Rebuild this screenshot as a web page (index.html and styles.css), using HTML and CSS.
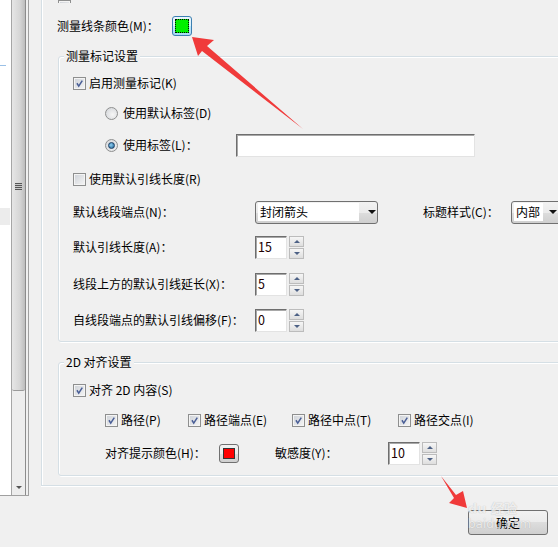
FILE: index.html
```html
<!DOCTYPE html>
<html lang="zh-CN">
<head>
  <meta charset="UTF-8">
  <title>测量设置</title>
  <link rel="stylesheet" href="styles.css">
</head>
<body>
  <div class="window">
    <aside class="sidebar">
      <div class="list">
        <span class="list-mark"></span>
        <span class="list-sel"></span>
      </div>
      <div class="vscroll">
        <div class="thumb"><span class="grip"></span></div>
        <div class="track"></div>
        <div class="arrow-down"></div>
      </div>
    </aside>

    <main class="main">
      <div class="outer">
        <div class="top-cut"><span class="check"></span></div>

        <div class="color-row">
          <span class="color-label">测量线条颜色(M)：</span>
          <span class="swatch focused"><span class="swatch-fill green"></span></span>
        </div>

        <section class="group">
          <div class="legend">测量标记设置</div>
          <div class="group-body rows-mark">
            <label class="opt"><span class="check"><svg viewBox="0 0 13 13"><path d="M3.5 6.2 L5.6 9.6 L9.8 3" /></svg></span>启用测量标记(K)</label>
            <label class="opt indent"><span class="radio"></span>使用默认标签(D)</label>
            <div class="row indent">
              <label class="opt label-l"><span class="radio on"><span class="dot"></span></span>使用标签(L)：</label>
              <span class="textbox wide"></span>
            </div>
            <label class="opt"><span class="check"></span>使用默认引线长度(R)</label>
            <div class="row">
              <span class="field-label">默认线段端点(N)：</span>
              <span class="combo combo-wide"><span class="combo-text">封闭箭头</span><span class="combo-arrow"></span></span>
              <span class="field-label-2">标题样式(C)：</span>
              <span class="combo combo-narrow"><span class="combo-text">内部</span><span class="combo-arrow"></span></span>
            </div>
            <div class="row">
              <span class="field-label">默认引线长度(A)：</span>
              <span class="spin"><span class="textbox num">15</span><span class="spin-btns"><span class="spin-btn up"></span><span class="spin-btn down"></span></span></span>
            </div>
            <div class="row">
              <span class="field-label">线段上方的默认引线延长(X)：</span>
              <span class="spin"><span class="textbox num">5</span><span class="spin-btns"><span class="spin-btn up"></span><span class="spin-btn down"></span></span></span>
            </div>
            <div class="row">
              <span class="field-label">自线段端点的默认引线偏移(F)：</span>
              <span class="spin"><span class="textbox num">0</span><span class="spin-btns"><span class="spin-btn up"></span><span class="spin-btn down"></span></span></span>
            </div>
          </div>
        </section>

        <section class="group group-align">
          <div class="legend">2D 对齐设置</div>
          <div class="group-body rows-align">
            <label class="opt"><span class="check"><svg viewBox="0 0 13 13"><path d="M3.5 6.2 L5.6 9.6 L9.8 3" /></svg></span>对齐 2D 内容(S)</label>
            <div class="row indent check-list">
              <label class="opt"><span class="check"><svg viewBox="0 0 13 13"><path d="M3.5 6.2 L5.6 9.6 L9.8 3" /></svg></span>路径(P)</label>
              <label class="opt"><span class="check"><svg viewBox="0 0 13 13"><path d="M3.5 6.2 L5.6 9.6 L9.8 3" /></svg></span>路径端点(E)</label>
              <label class="opt"><span class="check"><svg viewBox="0 0 13 13"><path d="M3.5 6.2 L5.6 9.6 L9.8 3" /></svg></span>路径中点(T)</label>
              <label class="opt"><span class="check"><svg viewBox="0 0 13 13"><path d="M3.5 6.2 L5.6 9.6 L9.8 3" /></svg></span>路径交点(I)</label>
            </div>
            <div class="row indent">
              <span class="hint-label">对齐提示颜色(H)：</span>
              <span class="swatch"><span class="swatch-fill red"></span></span>
              <span class="sens-label">敏感度(Y)：</span>
              <span class="spin"><span class="textbox num">10</span><span class="spin-btns"><span class="spin-btn up"></span><span class="spin-btn down"></span></span></span>
            </div>
          </div>
        </section>
      </div>

      <div class="footer">
        <button class="btn">确定</button>
      </div>
    </main>
  </div>

  <div class="watermark"><span class="wm-logo">du 经验</span><span class="wm-url">baidu.com</span></div>

  <svg class="arrows" viewBox="0 0 558 547">
    <polygon points="192,37 214,40 207,46 303,129 202,51 198,56" />
    <polygon points="441,476 456,495 463,491 467,508 449,503 454,498" />
  </svg>
</body>
</html>
```

FILE: styles.css
```css
html, body {
  margin: 0;
  padding: 0;
}
body {
  width: 558px;
  height: 547px;
  overflow: hidden;
  position: relative;
  background-color: #f0f0f0;
  font-family: "Noto Sans CJK SC", "Microsoft YaHei", sans-serif;
  font-size: 12px;
  line-height: 16px;
  color: #000;
}
.window {
  display: flex;
  height: 547px;
}

/* left list + scrollbar */
.sidebar {
  display: flex;
  width: 28px;
  height: 495px;
  border-right: 1px solid #a0a0a0;
  border-bottom: 1px solid #a0a0a0;
  flex-shrink: 0;
}
.list {
  width: 11px;
  background-color: #fff;
  border-right: 1px solid #a6a6a6;
  display: flex;
  flex-direction: column;
}
.list-mark {
  display: block;
  margin-top: 65px;
  width: 6px;
  height: 1px;
  background-color: #9ac0e6;
}
.list-sel {
  display: block;
  margin-top: 142px;
  width: 10px;
  height: 17px;
  background-color: #ececec;
}
.vscroll {
  width: 13px;
  border-right: 1px solid #8c8c8c;
  display: flex;
  flex-direction: column;
}
.thumb {
  height: 390px;
  background: linear-gradient(to right, #e6e6e6, #d6d6d6 60%, #bdbdbd);
  border-bottom: 1px solid #9a9a9a;
  border-radius: 0 0 2px 2px;
  display: flex;
  flex-direction: column;
  align-items: center;
}
.grip {
  display: block;
  margin-top: 183px;
  width: 7px;
  height: 7px;
  background: repeating-linear-gradient(to bottom, #555 0, #555 1px, #c8c8c8 1px, #c8c8c8 2px);
}
.track {
  flex: 1;
  background-color: #ededed;
}
.arrow-down {
  height: 16px;
  background-color: #ededed;
  display: flex;
  justify-content: center;
  align-items: center;
}
.arrow-down::before {
  content: "";
  border-left: 3px solid transparent;
  border-right: 3px solid transparent;
  border-top: 3px solid #555;
}

/* main panel */
.main {
  flex: 1;
  padding-left: 12px;
  display: flex;
  flex-direction: column;
}
.outer {
  width: 560px;
  height: 485px;
  box-sizing: content-box;
  padding-left: 16px;
  border-left: 1px solid #d5dfe5;
  border-bottom: 1px solid #d5dfe5;
  box-shadow: inset 1px 0 0 #fff, 0 1px 0 #fff;
}
.top-cut {
  height: 3px;
  overflow: hidden;
}
.top-cut .check {
  margin-top: -10px;
}
.color-row {
  display: flex;
  align-items: center;
  height: 24px;
  margin-top: 11px;
}
.color-label {
  width: 115px;
  margin-left: -1px;
}

/* colour buttons */
.swatch {
  display: inline-flex;
  box-sizing: border-box;
  width: 20px;
  height: 19px;
  padding: 3px;
  border: 1px solid #707070;
  border-radius: 3px;
  background: linear-gradient(#f2f2f2, #ebebeb 50%, #dddddd 50%, #cfcfcf);
}
.swatch.focused {
  height: 20px;
  padding: 2px;
  border-color: #3c7fb1;
  background: linear-gradient(#eaf6fd, #d9f0fc 50%, #bee6fd 50%, #a7d9f5);
}
.swatch-fill {
  flex: 1;
  border: 1px solid #333;
}
.focused .swatch-fill {
  border: 1px dotted #000;
}
.green {
  background-color: #00f000;
}
.red {
  background-color: #ff0000;
}

/* group boxes */
.group {
  width: 520px;
  margin-top: 18px;
  border: 1px solid #d5dfe5;
  border-radius: 3px;
  box-shadow: inset 1px 1px 0 #fff, 1px 1px 0 #fff;
}
.group-align {
  margin-top: 20px;
}
.legend {
  width: fit-content;
  margin: -9px 0 0 5px;
  padding: 0 2px;
  height: 16px;
  background-color: #f0f0f0;
}
.group-body {
  display: grid;
  align-items: center;
  padding-left: 14px;
  margin-top: 6px;
  padding-bottom: 3px;
}
.rows-mark {
  grid-template-rows: 26px 34px 30px 38px 28px 42px 32px 40px;
  padding-bottom: 1px;
}
.rows-align {
  grid-template-rows: 30px 30px 36px;
  margin-top: 5px;
  padding-bottom: 4px;
}
.row {
  display: flex;
  align-items: center;
}
.indent {
  margin-left: 32px;
}
.opt {
  display: flex;
  align-items: center;
}

/* checkbox + radio */
.check {
  display: inline-block;
  box-sizing: border-box;
  width: 13px;
  height: 13px;
  margin-right: 3px;
  border: 1px solid #8e8f8f;
  background: linear-gradient(135deg, #cdd1d7, #f6f6f6);
  box-shadow: inset 0 0 0 1px #f4f4f4;
  flex-shrink: 0;
}
.check svg {
  display: block;
  width: 11px;
  height: 11px;
}
.check path {
  fill: none;
  stroke: #4a5f97;
  stroke-width: 1.8;
}
.radio {
  display: inline-flex;
  justify-content: center;
  align-items: center;
  box-sizing: border-box;
  width: 13px;
  height: 13px;
  margin-right: 5px;
  border: 1px solid #8e8f8f;
  border-radius: 50%;
  background: radial-gradient(circle at 60% 60%, #f6f6f6, #cfd2d6);
}
.radio .dot {
  width: 5px;
  height: 5px;
  border-radius: 50%;
  background: radial-gradient(circle at 40% 40%, #8fd0f5, #1a5d8c);
  border: 1px solid #1b3f66;
}
.label-l {
  width: 131px;
}

/* inputs */
.textbox {
  display: block;
  box-sizing: border-box;
  height: 23px;
  background-color: #fff;
  border: 1px solid #e3e3e3;
  border-top-color: #6e6e6e;
  border-left-color: #6e6e6e;
  box-shadow: inset 1px 1px 0 #a8a8a8;
}
.textbox.wide {
  width: 239px;
}
.field-label {
  width: 182px;
}
.field-label-2 {
  width: 88px;
  margin-left: 45px;
}
.combo {
  display: flex;
  align-items: center;
  box-sizing: border-box;
  height: 23px;
  border: 1px solid #707070;
  border-radius: 3px;
  background: linear-gradient(#f2f2f2, #ebebeb 50%, #dddddd 50%, #cfcfcf);
}
.combo-wide {
  width: 123px;
}
.combo-narrow {
  width: 60px;
}
.combo-text {
  background-color: #fff;
  height: 18px;
  line-height: 18px;
  margin-left: 2px;
  padding-left: 2px;
}
.combo-wide .combo-text {
  width: 99px;
}
.combo-narrow .combo-text {
  padding-right: 3px;
}
.combo-arrow {
  margin-left: 9px;
  border-left: 4px solid transparent;
  border-right: 4px solid transparent;
  border-top: 4px solid #111;
}
.combo-narrow .combo-arrow {
  margin-left: 6px;
}
.spin {
  display: flex;
  gap: 2px;
}
.textbox.num {
  width: 32px;
  padding-left: 2px;
  line-height: 20px;
  color: #200000;
  font-size: 12.5px;
}
.spin-btns {
  display: flex;
  flex-direction: column;
  width: 15px;
  height: 23px;
  gap: 1px;
}
.spin-btn {
  flex: 1;
  display: flex;
  justify-content: center;
  align-items: center;
  border: 1px solid #bcbcbc;
  background: linear-gradient(#f6f6f6, #dedede);
}
.spin-btn.up::before {
  content: "";
  border-left: 3px solid transparent;
  border-right: 3px solid transparent;
  border-bottom: 3px solid #4d6185;
}
.spin-btn.down::before {
  content: "";
  border-left: 3px solid transparent;
  border-right: 3px solid transparent;
  border-top: 3px solid #4d6185;
}

/* 2D group rows */
.check-list .opt:nth-child(1) {
  width: 83px;
}
.check-list .opt:nth-child(2) {
  width: 104px;
}
.check-list .opt:nth-child(3) {
  width: 106px;
}
.hint-label {
  width: 114px;
}
.sens-label {
  width: 113px;
  margin-left: 36px;
}

/* footer */
.footer {
  width: 507px;
  display: flex;
  justify-content: flex-end;
  padding-top: 24px;
}
.btn {
  width: 80px;
  height: 25px;
  font-family: inherit;
  font-size: 12px;
  color: #000;
  border: 1px solid #707070;
  border-radius: 3px;
  background: linear-gradient(#f2f2f2, #ebebeb 50%, #dddddd 50%, #cfcfcf);
  padding: 0;
}

/* overlays from the screenshot */
.watermark {
  position: absolute;
  left: 468px;
  top: 502px;
  display: flex;
  flex-direction: column;
  font-family: "DejaVu Sans", sans-serif;
  color: rgba(255, 255, 255, 0.75);
  text-shadow: 0 0 1px rgba(0, 0, 0, 0.25);
  line-height: 14px;
  pointer-events: none;
}
.wm-logo {
  font-size: 13px;
  font-weight: bold;
}
.wm-url {
  font-size: 12px;
  margin-top: 1px;
}
.arrows {
  position: absolute;
  left: 0;
  top: 0;
  width: 558px;
  height: 547px;
  pointer-events: none;
}
.arrows polygon {
  fill: #f03a3a;
}
```
